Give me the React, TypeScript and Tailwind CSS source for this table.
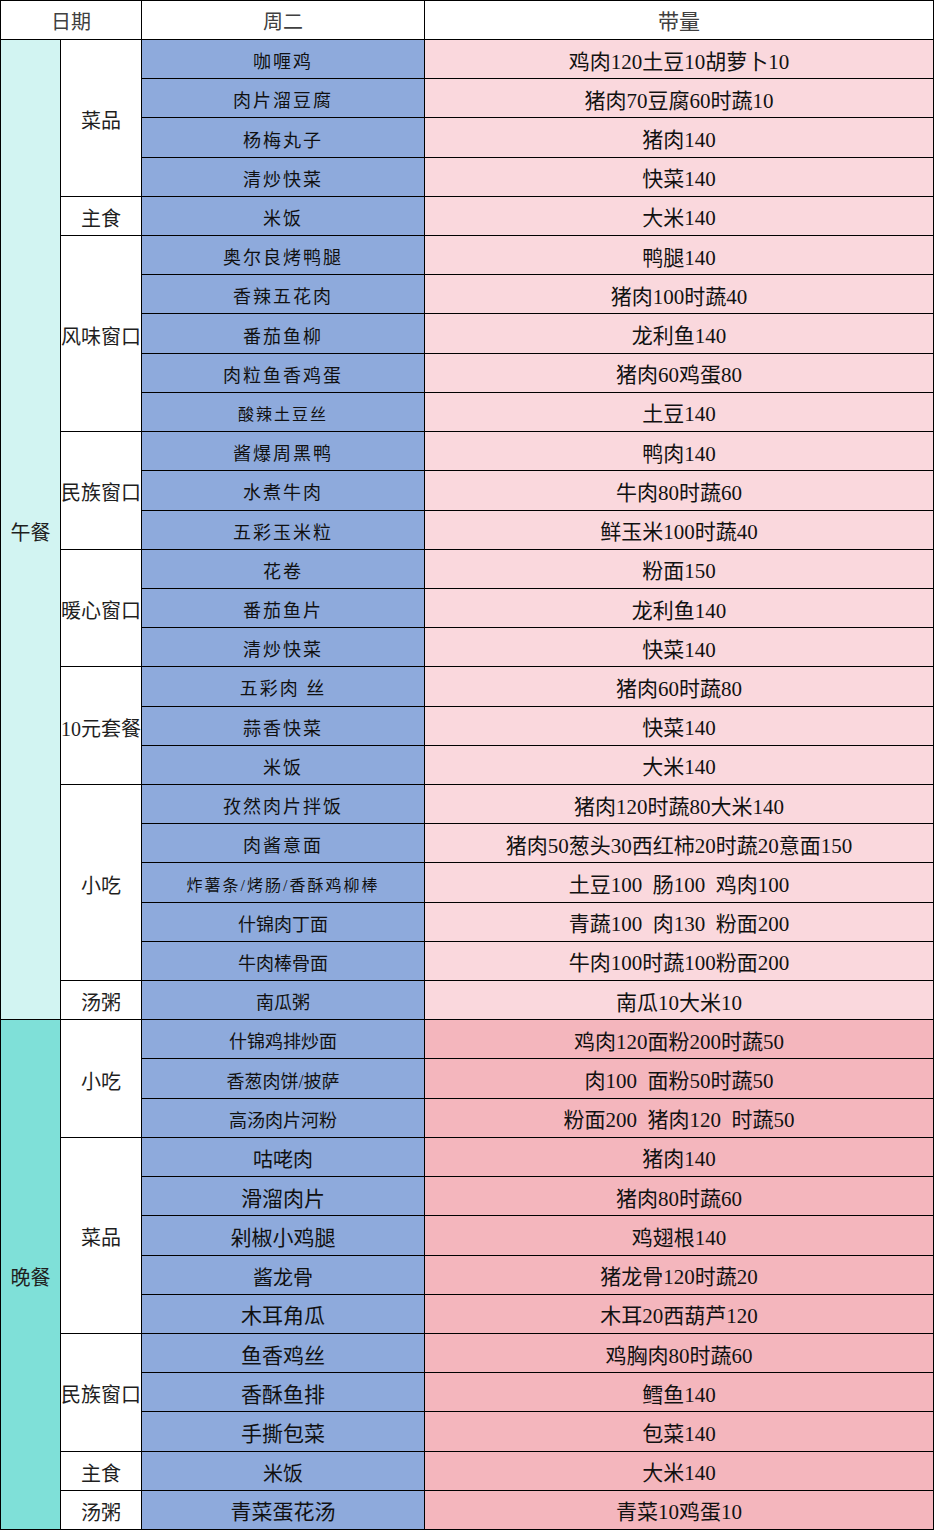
import React from "react";

type Row = { dish: string; amt: string; dc?: string };
type Group = { label: string; span: string; rows: Row[] };
type Meal = { label: string; span: string; bg: string; amtBg: string; groups: Group[] };

const A = "text-[18px] tracking-[2px]";
const S = "text-[16px] tracking-[2px]";
const P = "text-[18px]";
const L = "text-[21px]";
const M = "text-[20px]";

const meals: Meal[] = [
  {
    label: "午餐",
    span: "row-span-25",
    bg: "bg-[#d2f4f2]",
    amtBg: "bg-[#fad8dd]",
    groups: [
      {
        label: "菜品",
        span: "row-span-4",
        rows: [
          { dish: "咖喱鸡", amt: "鸡肉120土豆10胡萝卜10", dc: A },
          { dish: "肉片溜豆腐", amt: "猪肉70豆腐60时蔬10", dc: A },
          { dish: "杨梅丸子", amt: "猪肉140", dc: A },
          { dish: "清炒快菜", amt: "快菜140", dc: A },
        ],
      },
      { label: "主食", span: "row-span-1", rows: [{ dish: "米饭", amt: "大米140", dc: A }] },
      {
        label: "风味窗口",
        span: "row-span-5",
        rows: [
          { dish: "奥尔良烤鸭腿", amt: "鸭腿140", dc: A },
          { dish: "香辣五花肉", amt: "猪肉100时蔬40", dc: A },
          { dish: "番茄鱼柳", amt: "龙利鱼140", dc: A },
          { dish: "肉粒鱼香鸡蛋", amt: "猪肉60鸡蛋80", dc: A },
          { dish: "酸辣土豆丝", amt: "土豆140", dc: S },
        ],
      },
      {
        label: "民族窗口",
        span: "row-span-3",
        rows: [
          { dish: "酱爆周黑鸭", amt: "鸭肉140", dc: A },
          { dish: "水煮牛肉", amt: "牛肉80时蔬60", dc: A },
          { dish: "五彩玉米粒", amt: "鲜玉米100时蔬40", dc: A },
        ],
      },
      {
        label: "暖心窗口",
        span: "row-span-3",
        rows: [
          { dish: "花卷", amt: "粉面150", dc: A },
          { dish: "番茄鱼片", amt: "龙利鱼140", dc: A },
          { dish: "清炒快菜", amt: "快菜140", dc: A },
        ],
      },
      {
        label: "10元套餐",
        span: "row-span-3",
        rows: [
          { dish: "五彩肉 丝", amt: "猪肉60时蔬80", dc: A },
          { dish: "蒜香快菜", amt: "快菜140", dc: A },
          { dish: "米饭", amt: "大米140", dc: A },
        ],
      },
      {
        label: "小吃",
        span: "row-span-5",
        rows: [
          { dish: "孜然肉片拌饭", amt: "猪肉120时蔬80大米140", dc: A },
          { dish: "肉酱意面", amt: "猪肉50葱头30西红柿20时蔬20意面150", dc: A },
          { dish: "炸薯条/烤肠/香酥鸡柳棒", amt: "土豆100  肠100  鸡肉100", dc: S },
          { dish: "什锦肉丁面", amt: "青蔬100  肉130  粉面200", dc: P },
          { dish: "牛肉棒骨面", amt: "牛肉100时蔬100粉面200", dc: P },
        ],
      },
      { label: "汤粥", span: "row-span-1", rows: [{ dish: "南瓜粥", amt: "南瓜10大米10", dc: P }] },
    ],
  },
  {
    label: "晚餐",
    span: "row-span-13",
    bg: "bg-[#7fe0d8]",
    amtBg: "bg-[#f4b6bd]",
    groups: [
      {
        label: "小吃",
        span: "row-span-3",
        rows: [
          { dish: "什锦鸡排炒面", amt: "鸡肉120面粉200时蔬50", dc: P },
          { dish: "香葱肉饼/披萨", amt: "肉100  面粉50时蔬50", dc: P },
          { dish: "高汤肉片河粉", amt: "粉面200  猪肉120  时蔬50", dc: P },
        ],
      },
      {
        label: "菜品",
        span: "row-span-5",
        rows: [
          { dish: "咕咾肉", amt: "猪肉140", dc: M },
          { dish: "滑溜肉片", amt: "猪肉80时蔬60", dc: L },
          { dish: "剁椒小鸡腿", amt: "鸡翅根140", dc: L },
          { dish: "酱龙骨", amt: "猪龙骨120时蔬20", dc: M },
          { dish: "木耳角瓜", amt: "木耳20西葫芦120", dc: L },
        ],
      },
      {
        label: "民族窗口",
        span: "row-span-3",
        rows: [
          { dish: "鱼香鸡丝", amt: "鸡胸肉80时蔬60", dc: L },
          { dish: "香酥鱼排", amt: "鳕鱼140", dc: L },
          { dish: "手撕包菜", amt: "包菜140", dc: L },
        ],
      },
      { label: "主食", span: "row-span-1", rows: [{ dish: "米饭", amt: "大米140", dc: M }] },
      { label: "汤粥", span: "row-span-1", rows: [{ dish: "青菜蛋花汤", amt: "青菜10鸡蛋10", dc: L }] },
    ],
  },
];

const cell = "flex items-center justify-center whitespace-pre min-w-0 pt-[6px]";
const hcell = "flex items-center justify-center whitespace-pre min-w-0 pt-[4px]";

export default function App() {
  const cells: React.ReactNode[] = [];
  meals.forEach((meal, mi) => {
    let firstMeal = true;
    meal.groups.forEach((g, gi) => {
      let firstGroup = true;
      g.rows.forEach((r, ri) => {
        if (firstMeal) {
          cells.push(
            <div key={`m${mi}`} className={`${meal.span} ${meal.bg} ${cell} text-[20px] text-[#1f1f1f]`}>
              {meal.label}
            </div>
          );
          firstMeal = false;
        }
        if (firstGroup) {
          cells.push(
            <div key={`g${mi}-${gi}`} className={`${g.span} bg-white ${cell} text-[20px] text-[#1f1f1f] overflow-visible z-10`}>
              {g.label}
            </div>
          );
          firstGroup = false;
        }
        cells.push(
          <div key={`d${mi}-${gi}-${ri}`} className={`bg-[#8eaadc] ${cell} ${r.dc} text-[#111]`}>
            {r.dish}
          </div>
        );
        cells.push(
          <div key={`a${mi}-${gi}-${ri}`} className={`${meal.amtBg} ${cell} text-[21px] text-[#111]`}>
            {r.amt}
          </div>
        );
      });
    });
  });

  return (
    <div
      className="w-[935px] bg-white"
      style={{ fontFamily: "'Liberation Serif', 'Noto Sans CJK SC', serif" }}
    >
      <div className="grid h-[1530px] w-[934px] grid-cols-[59px_80px_282px_508px] grid-rows-[38px_repeat(38,minmax(0,1fr))] gap-px bg-black p-px leading-none">
        <div className={`col-span-2 bg-white ${hcell} text-[20px] text-[#404040]`}>日期</div>
        <div className={`bg-white ${hcell} text-[20px] text-[#404040]`}>周二</div>
        <div className={`bg-white ${hcell} text-[21px] text-[#404040]`}>带量</div>
        {cells}
      </div>
    </div>
  );
}
